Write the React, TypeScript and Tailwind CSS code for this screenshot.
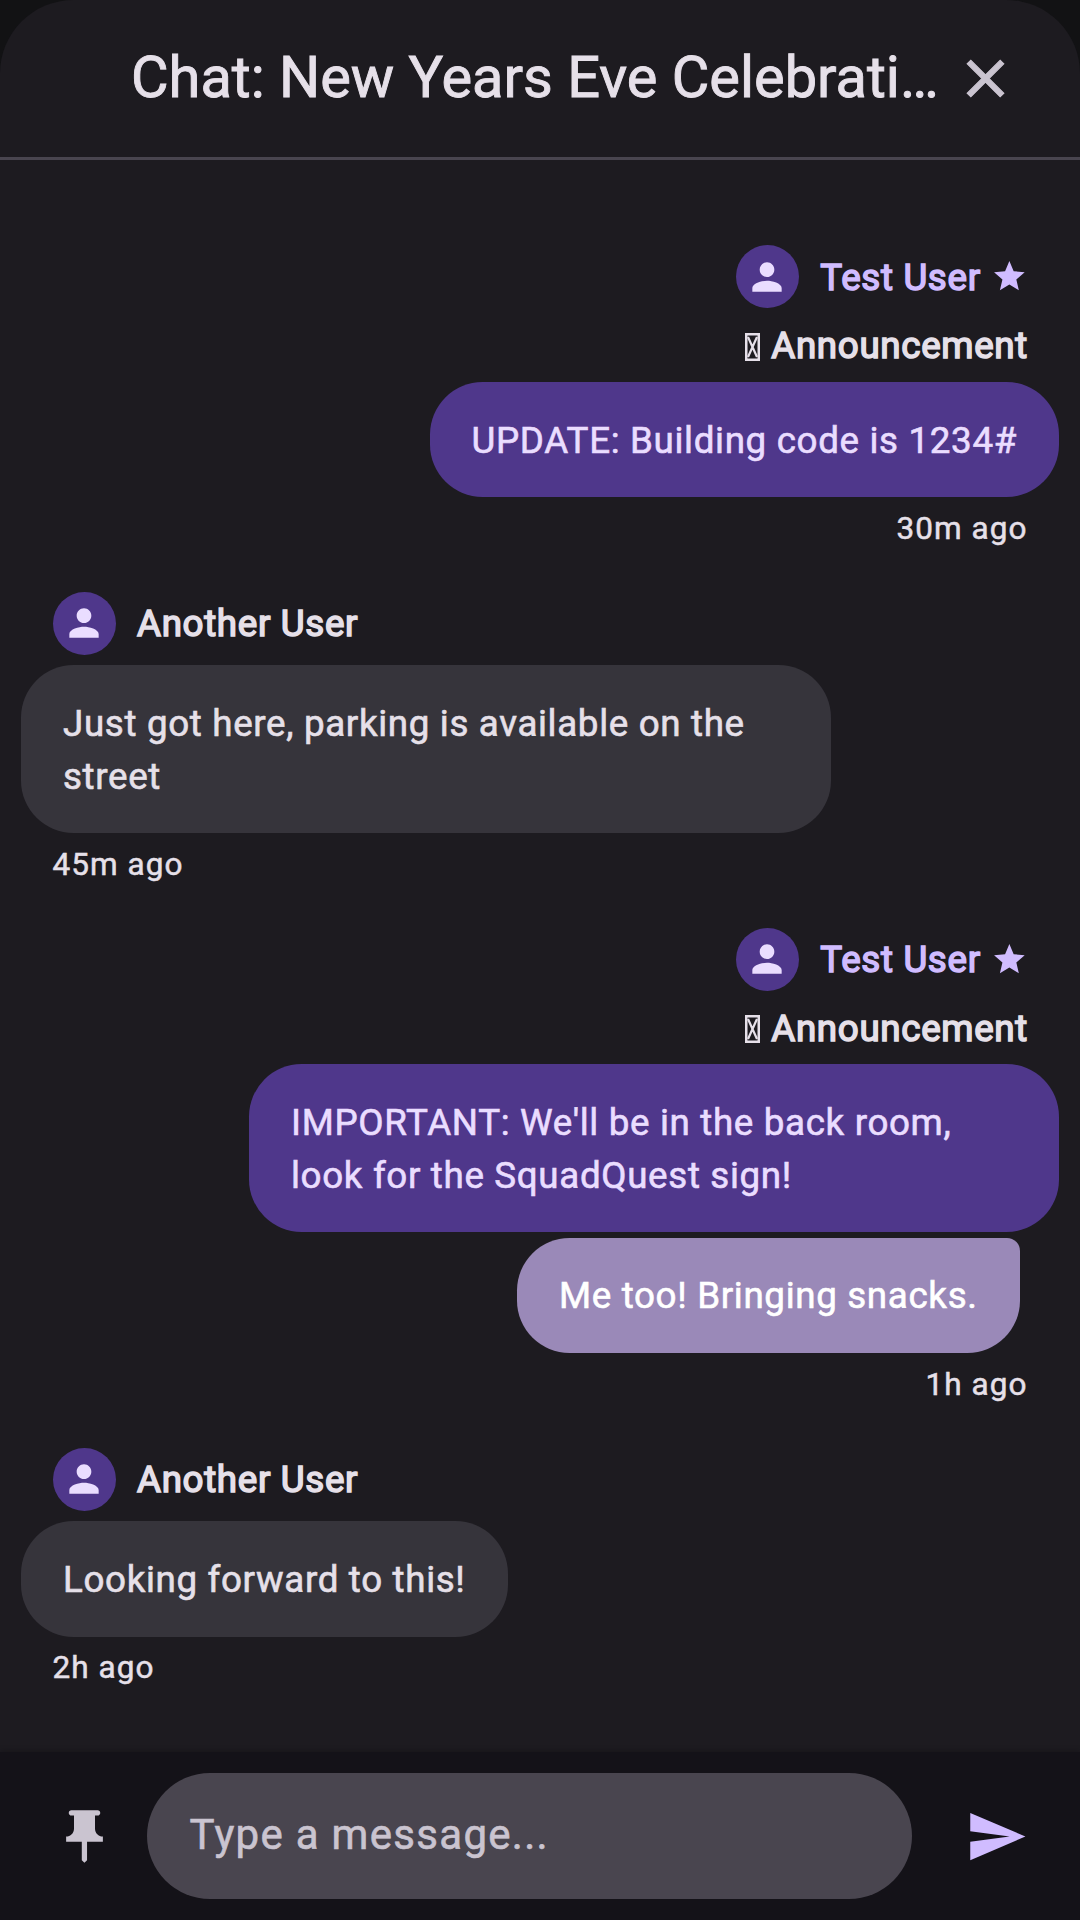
import React from "react";

type Message = {
  mine?: boolean;
  name: string;
  lines: string[];
  reply?: string;
  time: string;
};

const messages: Message[] = [
  { mine: true, name: "Test User", lines: ["UPDATE: Building code is 1234#"], time: "30m ago" },
  { name: "Another User", lines: ["Just got here, parking is available on the", "street"], time: "45m ago" },
  {
    mine: true,
    name: "Test User",
    lines: ["IMPORTANT: We'll be in the back room,", "look for the SquadQuest sign!"],
    reply: "Me too! Bringing snacks.",
    time: "1h ago",
  },
  { name: "Another User", lines: ["Looking forward to this!"], time: "2h ago" },
];

function Icon({ d, className }: { d: string; className: string }) {
  return (
    <svg viewBox="0 0 24 24" fill="currentColor" className={"shrink-0 " + className}>
      <path d={d} />
    </svg>
  );
}

const PERSON =
  "M12 12c2.21 0 4-1.79 4-4s-1.79-4-4-4-4 1.79-4 4 1.79 4 4 4zm0 2c-2.67 0-8 1.34-8 4v2h16v-2c0-2.66-5.33-4-8-4z";
const STAR = "M12 17.27L18.18 21l-1.64-7.03L22 9.24l-7.19-.61L12 2 9.19 8.63 2 9.24l5.46 4.73L5.82 21z";
const CLOSE =
  "M19 6.41L17.59 5 12 10.59 6.41 5 5 6.41 10.59 12 5 17.59 6.41 19 12 13.41 17.59 19 19 17.59 13.41 12z";
const PIN =
  "M16 9V4h1c.55 0 1-.45 1-1s-.45-1-1-1H7c-.55 0-1 .45-1 1s.45 1 1 1h1v5c0 1.66-1.34 3-3 3v2h5.97v7l1 1 1-1v-7H19v-2c-1.66 0-3-1.34-3-3z";
const SEND = "M2.01 21L23 12 2.01 3 2 10l15 2-15 2z";

function MissingGlyph() {
  return (
    <svg viewBox="0 0 15 28" className="mr-[11.5px] h-[28px] w-[15px]" fill="none" stroke="currentColor">
      <rect x="1.25" y="1.25" width="12.5" height="25.5" strokeWidth="2.5" />
      <path d="M3 4L12 24M12 4L3 24" strokeWidth="2.2" />
    </svg>
  );
}

function MessageGroup({ m }: { m: Message }) {
  return (
    <div className={"flex flex-col mb-[42px] " + (m.mine ? "items-end" : "items-start")}>
      <div className="flex h-[63px] items-center px-[31.5px]">
        <div className="flex size-[63px] items-center justify-center rounded-full bg-[#4f378b] text-[#eaddff]">
          <Icon d={PERSON} className="size-[44px]" />
        </div>
        <span
          className={
            "ml-[21.5px] pt-[2px] text-[36.75px] leading-[52.5px] tracking-[0.656px] [-webkit-text-stroke:1.5px_currentColor] " +
            (m.mine ? "text-[#d0bcff]" : "text-[#e6e0e9]")
          }
        >
          {m.name}
        </span>
        {m.mine && <Icon d={STAR} className="ml-[10px] size-[36.75px] text-[#d0bcff]" />}
      </div>
      {m.mine && (
        <div className="mt-[12px] mb-[-1.5px] flex items-center pr-[31px] pl-[31.5px] text-[36.75px] leading-[52.5px] tracking-[0.656px] [-webkit-text-stroke:1.5px_currentColor]">
          <MissingGlyph />
          Announcement
        </div>
      )}
      <div
        className={
          "mt-[10.5px] max-w-[810px] rounded-[52.5px] px-[42px] pt-[33px] pb-[30px] text-[36.75px] leading-[52.5px] tracking-[0.656px] whitespace-nowrap [-webkit-text-stroke:0.6px_currentColor] " +
          (m.lines.length > 1 ? "w-[810px] " : "") +
          (m.mine ? "bg-[#4f378b] text-[#eaddff]" : "bg-[#36343b]")
        }
      >
        {m.lines.map((l) => (
          <div key={l}>{l}</div>
        ))}
      </div>
      {m.reply && (
        <div className="mt-[5.25px] mr-[39.4px] rounded-[52.5px] rounded-tr-[13px] bg-[#9a89b8] px-[42px] pt-[32.5px] pb-[30.5px] text-[36.75px] leading-[52.5px] tracking-[0.656px] whitespace-nowrap text-white [-webkit-text-stroke:0.6px_currentColor]">
          {m.reply}
        </div>
      )}
      <div className="mt-[10.5px] px-[31.5px] text-[31.5px] leading-[42px] tracking-[1.05px] [-webkit-text-stroke:0.5px_currentColor]">
        {m.time}
      </div>
    </div>
  );
}

export default function App() {
  return (
    <div className="h-[1920px] w-[1080px] overflow-hidden bg-[#121214] font-['Roboto',sans-serif] text-[#e6e0e9]">
      <div className="flex h-full flex-col overflow-hidden rounded-t-[73.5px] bg-[#1d1b20]">
        <header className="flex h-[160px] shrink-0 items-center border-b-3 border-[#49454f] pr-[63px] pb-[1px] pl-[131px]">
          <h1 className="w-[823px] pb-[1px] text-[57.75px] leading-[73.5px] font-normal whitespace-nowrap [-webkit-text-stroke:0.9px_currentColor]">
            Chat: New Years Eve Celebrati…
          </h1>
          <button aria-label="Close" className="text-[#cac4d0]">
            <Icon d={CLOSE} className="size-[63px] [stroke-width:0.4] stroke-current" />
          </button>
        </header>
        <main className="flex-1 overflow-hidden px-[21px] pt-[85.3px]">
          {messages.map((m, i) => (
            <MessageGroup key={i} m={m} />
          ))}
        </main>
        <footer className="flex h-[168px] shrink-0 items-center bg-[#141218] pr-[52px] pl-[52.5px] shadow-[0_-2px_5px_rgba(0,0,0,0.18)]">
          <Icon d={PIN} className="size-[63px] text-[#cac4d0]" />
          <div className="ml-[31.5px] flex h-[126px] w-[765px] items-center rounded-full bg-[#49454f] px-[42.5px] pb-[4px] text-[42px] leading-[63px] tracking-[1.3px] text-[#cac4d0] [-webkit-text-stroke:0.6px_currentColor]">
            Type a message...
          </div>
          <Icon d={SEND} className="ml-[53px] size-[63px] text-[#d0bcff]" />
        </footer>
      </div>
    </div>
  );
}
